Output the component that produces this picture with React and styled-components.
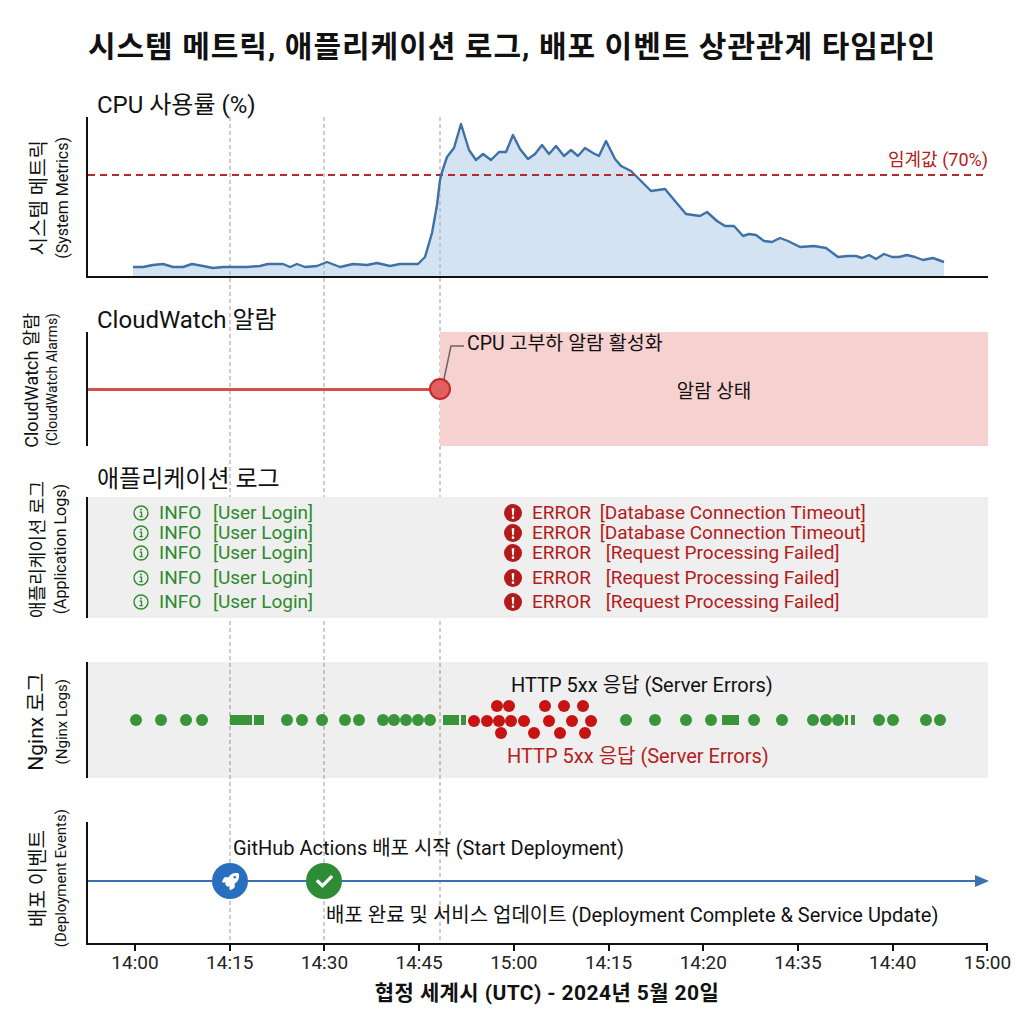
import React from "react";
import styled, { createGlobalStyle } from "styled-components";
import { FaRocket, FaCheck } from "react-icons/fa";

const FONT = `Roboto, "Noto Sans CJK KR", "Noto Sans", sans-serif`;

const GlobalStyle = createGlobalStyle`
  html, body { margin: 0; padding: 0; background: #fff; }
  body { font-family: ${FONT}; color: #111; }
`;

const Page = styled.div`
  position: relative;
  width: 1024px;
  height: 1024px;
  overflow: hidden;
  background: #fff;
`;

const GridOverlay = styled.svg`
  position: absolute;
  left: 0;
  top: 0;
  z-index: 0;
  pointer-events: none;
`;

const Content = styled.div`
  position: relative;
  z-index: 1;
  display: flex;
  flex-direction: column;
`;

const Title = styled.h1`
  margin: 0;
  height: 88px;
  display: flex;
  align-items: center;
  justify-content: center;
  font-size: 30px;
  letter-spacing: 1px;
  font-weight: 700;
  color: #111;
`;

const PanelTitle = styled.div`
  margin-top: ${(p) => p.$mt || 0}px;
  height: ${(p) => p.$h}px;
  display: flex;
  align-items: center;
  padding-left: 97px;
  font-size: 24px;
  color: #111;
`;

const PlotRow = styled.div`
  display: grid;
  grid-template-columns: 86px 902px;
  grid-template-rows: ${(p) => p.$h}px;
  height: ${(p) => p.$h}px;
  margin-top: ${(p) => p.$mt || 0}px;
`;

const LabelCell = styled.div`
  min-height: 0;
  display: flex;
  justify-content: flex-end;
  align-items: center;
  gap: ${(p) => p.$gap}px;
  padding-right: ${(p) => p.$pr}px;
  transform: translateY(${(p) => p.$shift || 0}px);
`;

const LabelText = styled.span`
  flex: none;
  writing-mode: vertical-rl;
  text-orientation: sideways;
  transform: rotate(180deg);
  font-size: ${(p) => p.$size}px;
  line-height: ${(p) => p.$size + 2}px;
  white-space: nowrap;
  color: #111;
`;

const Plot = styled.div`
  position: relative;
  min-height: 0;
  box-sizing: border-box;
  border-left: 2px solid #111;
  border-bottom: ${(p) => (p.$axis ? "2px solid #111" : "none")};
  background: ${(p) => p.$bg || "transparent"};
`;

const ChartSvg = styled.svg`
  position: absolute;
  left: 0;
  top: 0;
  overflow: visible;
`;

const Note = styled.span`
  position: absolute;
  left: ${(p) => (p.$left != null ? `${p.$left}px` : "auto")};
  right: ${(p) => (p.$right != null ? `${p.$right}px` : "auto")};
  top: ${(p) => p.$top}px;
  font-size: ${(p) => p.$size || 20}px;
  line-height: 22px;
  color: ${(p) => p.$color || "#111"};
  white-space: nowrap;
`;

const AlarmPlot = styled(Plot)`
  display: grid;
  grid-template-columns: 352px 1fr;
  grid-template-rows: 100%;
`;

const AlarmLineCell = styled.div`
  display: flex;
  align-items: center;
`;

const AlarmLine = styled.div`
  width: 100%;
  height: 3px;
  background: #d44e4e;
`;

const AlarmZone = styled.div`
  background: #f7d0d0;
  display: flex;
  align-items: center;
  justify-content: center;
  font-size: 19px;
  color: #111;
`;

const AlarmDot = styled.div`
  position: absolute;
  left: 341px;
  top: 46px;
  width: 22px;
  height: 22px;
  box-sizing: border-box;
  border-radius: 50%;
  background: #e06060;
  border: 2px solid #c22a2a;
`;

const LogsPlot = styled(Plot)`
  display: flex;
  flex-direction: column;
  padding: 6px 0 0 45px;
`;

const LogRow = styled.div`
  display: grid;
  grid-template-columns: 371px auto;
  height: 20px;
  margin-top: ${(p) => p.$mt || 0}px;
  align-items: center;
`;

const LogEntry = styled.div`
  display: flex;
  align-items: center;
  color: ${(p) => p.$color};
  font-size: 19px;
  line-height: 20px;
  white-space: pre;
`;

const LogIcon = styled.svg`
  flex: none;
  margin-right: 10px;
`;

const LogLevel = styled.span`
  margin-right: ${(p) => p.$gap}px;
`;

const Marker = styled.div`
  position: absolute;
  left: ${(p) => p.$left}px;
  top: 41px;
  width: 36px;
  height: 36px;
  border-radius: 50%;
  background: ${(p) => p.$bg};
  display: flex;
  align-items: center;
  justify-content: center;
  color: #fff;
`;

const TickRow = styled.div`
  display: flex;
  padding-left: 87.64px;
`;

const Tick = styled.div`
  flex: none;
  width: 94.72px;
  display: flex;
  flex-direction: column;
  align-items: center;
`;

const TickMark = styled.div`
  width: 2px;
  height: 6px;
  background: #111;
`;

const TickLabel = styled.span`
  margin-top: 2px;
  font-size: 19px;
  line-height: 20px;
  color: #222;
`;

const AxisTitle = styled.div`
  margin-top: 7px;
  padding-left: 70px;
  text-align: center;
  font-size: 21px;
  letter-spacing: 0.4px;
  line-height: 26px;
  font-weight: 700;
  color: #111;
`;

/* ---------- data ---------- */

const cpu = [
  [133, 267], [143, 267], [153, 265], [163, 264], [173, 267], [183, 267], [192, 264],
  [203, 266], [213, 268], [223, 267], [233, 267], [247, 267], [260, 266], [268, 264],
  [283, 264], [290, 267], [297, 264], [305, 267], [317, 266], [327, 262], [340, 267],
  [353, 264], [367, 265], [377, 263], [390, 266], [400, 264], [418, 264], [425, 257],
  [432, 233], [437, 205], [440, 180], [442, 172], [447, 157], [454, 148], [461, 124],
  [469, 150], [476, 160], [483, 154], [491, 160], [499, 152], [506, 152], [513, 135],
  [520, 149], [528, 159], [535, 154], [542, 145], [549, 154], [556, 146], [564, 156],
  [571, 150], [578, 156], [585, 148], [593, 153], [599, 156], [606, 141], [615, 159],
  [621, 166], [631, 171], [639, 179], [651, 191], [665, 189], [675, 201], [686, 214],
  [700, 216], [707, 212], [717, 221], [725, 226], [734, 226], [743, 236], [749, 234],
  [756, 235], [764, 241], [772, 242], [780, 238], [788, 241], [800, 247], [814, 246],
  [826, 248], [838, 257], [848, 256], [856, 256], [862, 258], [869, 255], [876, 259],
  [884, 254], [892, 257], [899, 257], [907, 255], [915, 257], [923, 260], [933, 258],
  [944, 262],
];
const cpuLine = cpu.map(([x, y], i) => `${i ? "L" : "M"}${x},${y}`).join(" ");
const cpuArea = `M133,276 ${cpu.map(([x, y]) => `L${x},${y}`).join(" ")} L944,276 Z`;

const greenDots = [136, 161, 186, 202, 287, 302, 322, 345, 359, 383, 394, 406, 418, 430,
  626, 655, 686, 711, 754, 782, 813, 826, 838, 879, 893, 926, 940];
const greenBars = [[230, 252], [254, 264], [443, 459], [461, 466], [722, 739], [845, 848], [851, 855]];
const redDots = [
  ...[474, 487, 499, 511, 524, 549, 572, 591].map((x) => [x, 721]),
  ...[497, 509, 545, 564, 583].map((x) => [x, 706]),
  ...[501, 534, 560, 585].map((x) => [x, 733]),
];

const ticks = ["14:00", "14:15", "14:30", "14:45", "15:00", "14:15", "14:20", "14:35", "14:40", "15:00"];

const GREEN = "#2d8a2d";
const RED = "#b31b1b";

const logs = [
  { mt: 0, err: "[Database Connection Timeout]", gap: 4 },
  { mt: 0, err: "[Database Connection Timeout]", gap: 4 },
  { mt: 0, err: "[Request Processing Failed]", gap: 10 },
  { mt: 5, err: "[Request Processing Failed]", gap: 10 },
  { mt: 4, err: "[Request Processing Failed]", gap: 10 },
];

/* ---------- parts ---------- */

function AxisLabel({ main, sub, mainSize, subSize, gap, pr, shift }) {
  return (
    <LabelCell $gap={gap} $pr={pr} $shift={shift}>
      <LabelText $size={mainSize}>{main}</LabelText>
      <LabelText $size={subSize}>{sub}</LabelText>
    </LabelCell>
  );
}

function InfoIcon() {
  return (
    <LogIcon width="16" height="16" viewBox="0 0 16 16">
      <circle cx="8" cy="8" r="7" fill="none" stroke={GREEN} strokeWidth="1.4" />
      <circle cx="8" cy="4.6" r="1" fill={GREEN} />
      <path d="M6.6 7.1h1.9v4.4 M6.4 11.6h3.3" fill="none" stroke={GREEN} strokeWidth="1.3" />
    </LogIcon>
  );
}

function ErrorIcon() {
  return (
    <LogIcon width="18" height="18" viewBox="0 0 18 18">
      <circle cx="9" cy="9" r="9" fill={RED} />
      <path d="M7.7 4.2h2.6l-0.5 7h-1.6z" fill="#fff" />
      <circle cx="9" cy="13.7" r="1.35" fill="#fff" />
    </LogIcon>
  );
}

export default function App() {
  return (
    <Page>
      <GlobalStyle />
      <GridOverlay width="1024" height="1024" viewBox="0 0 1024 1024">
        {[230, 324, 440].map((x) => (
          <line key={x} x1={x} y1="117" x2={x} y2="943" stroke="#9c9c9c" strokeWidth="1" strokeDasharray="4 3" />
        ))}
      </GridOverlay>
      <Content>
        <Title>시스템 메트릭, 애플리케이션 로그, 배포 이벤트 상관관계 타임라인</Title>

        {/* CPU */}
        <PanelTitle $h={29}>CPU 사용률 (%)</PanelTitle>
        <PlotRow $h={161}>
          <AxisLabel main="시스템 메트릭" sub="(System Metrics)" mainSize={20} subSize={16} gap={4} pr={14} shift={0} />
          <Plot $axis>
            <ChartSvg width="900" height="159" viewBox="88 117 900 159">
              <path d={cpuArea} fill="rgba(160,192,224,0.45)" />
              <line x1="88" y1="175" x2="988" y2="175" stroke="#b52a2a" strokeWidth="2" strokeDasharray="7 5" />
              <path d={cpuLine} fill="none" stroke="#3f70a6" strokeWidth="2.4" strokeLinejoin="round" />
            </ChartSvg>
            <Note $right={0} $top={32} $size={18} $color="#b42020">임계값 (70%)</Note>
          </Plot>
        </PlotRow>

        {/* CloudWatch */}
        <PanelTitle $mt={24} $h={30}>CloudWatch 알람</PanelTitle>
        <PlotRow $h={114}>
          <AxisLabel main="CloudWatch 알람" sub="(CloudWatch Alarms)" mainSize={18} subSize={14} gap={2} pr={26} shift={-9} />
          <AlarmPlot>
            <AlarmLineCell>
              <AlarmLine />
            </AlarmLineCell>
            <AlarmZone>알람 상태</AlarmZone>
            <ChartSvg width="900" height="114" viewBox="88 332 900 114">
              <polyline points="444,379 451,346 464,346" fill="none" stroke="#666" strokeWidth="1.5" />
            </ChartSvg>
            <AlarmDot />
            <Note $left={379} $top={1} $size={19.5}>CPU 고부하 알람 활성화</Note>
          </AlarmPlot>
        </PlotRow>

        {/* Application logs */}
        <PanelTitle $mt={14} $h={32}>애플리케이션 로그</PanelTitle>
        <PlotRow $h={121} $mt={5}>
          <AxisLabel main="애플리케이션 로그" sub="(Application Logs)" mainSize={18} subSize={16} gap={4} pr={16} shift={-8} />
          <LogsPlot $bg="#efefef">
            {logs.map((l, i) => (
              <LogRow key={i} $mt={l.mt}>
                <LogEntry $color={GREEN}>
                  <InfoIcon />
                  <LogLevel $gap={7}>INFO </LogLevel>
                  <span>[User Login]</span>
                </LogEntry>
                <LogEntry $color={RED}>
                  <ErrorIcon />
                  <LogLevel $gap={l.gap}>ERROR </LogLevel>
                  <span>{l.err}</span>
                </LogEntry>
              </LogRow>
            ))}
          </LogsPlot>
        </PlotRow>

        {/* Nginx */}
        <PlotRow $h={116} $mt={44}>
          <AxisLabel main="Nginx 로그" sub="(Nginx Logs)" mainSize={21} subSize={15} gap={6} pr={15} shift={2} />
          <Plot $bg="rgba(0,0,0,0.062)">
            <ChartSvg width="900" height="116" viewBox="88 662 900 116">
              {greenBars.map(([a, b]) => (
                <rect key={a} x={a} y="715" width={b - a} height="10" fill="#3a953a" />
              ))}
              {greenDots.map((x) => (
                <circle key={x} cx={x} cy="720" r="6" fill="#3a953a" />
              ))}
              {redDots.map(([x, y]) => (
                <circle key={`${x}-${y}`} cx={x} cy={y} r="6" fill="#c81313" />
              ))}
            </ChartSvg>
            <Note $left={423} $top={12}>HTTP 5xx 응답 (Server Errors)</Note>
            <Note $left={419} $top={83} $color="#b42020">HTTP 5xx 응답 (Server Errors)</Note>
          </Plot>
        </PlotRow>

        {/* Deployment */}
        <PlotRow $h={123} $mt={44}>
          <AxisLabel main="배포 이벤트" sub="(Deployment Events)" mainSize={20} subSize={15} gap={4} pr={16} shift={-5} />
          <Plot $axis>
            <ChartSvg width="900" height="121" viewBox="88 822 900 121">
              <line x1="88" y1="881" x2="980" y2="881" stroke="#3a72b0" strokeWidth="2" />
              <polygon points="975,875 989,881 975,887" fill="#3a72b0" />
            </ChartSvg>
            <Marker $left={124} $bg="#2a6ebf">
              <FaRocket size={17} />
            </Marker>
            <Marker $left={218} $bg="#2e8b36">
              <FaCheck size={17} />
            </Marker>
            <Note $left={145} $top={15}>GitHub Actions 배포 시작 (Start Deployment)</Note>
            <Note $left={238} $top={82}>배포 완료 및 서비스 업데이트 (Deployment Complete &amp; Service Update)</Note>
          </Plot>
        </PlotRow>

        <TickRow>
          {ticks.map((t, i) => (
            <Tick key={i}>
              <TickMark />
              <TickLabel>{t}</TickLabel>
            </Tick>
          ))}
        </TickRow>
        <AxisTitle>협정 세계시 (UTC) - 2024년 5월 20일</AxisTitle>
      </Content>
    </Page>
  );
}
